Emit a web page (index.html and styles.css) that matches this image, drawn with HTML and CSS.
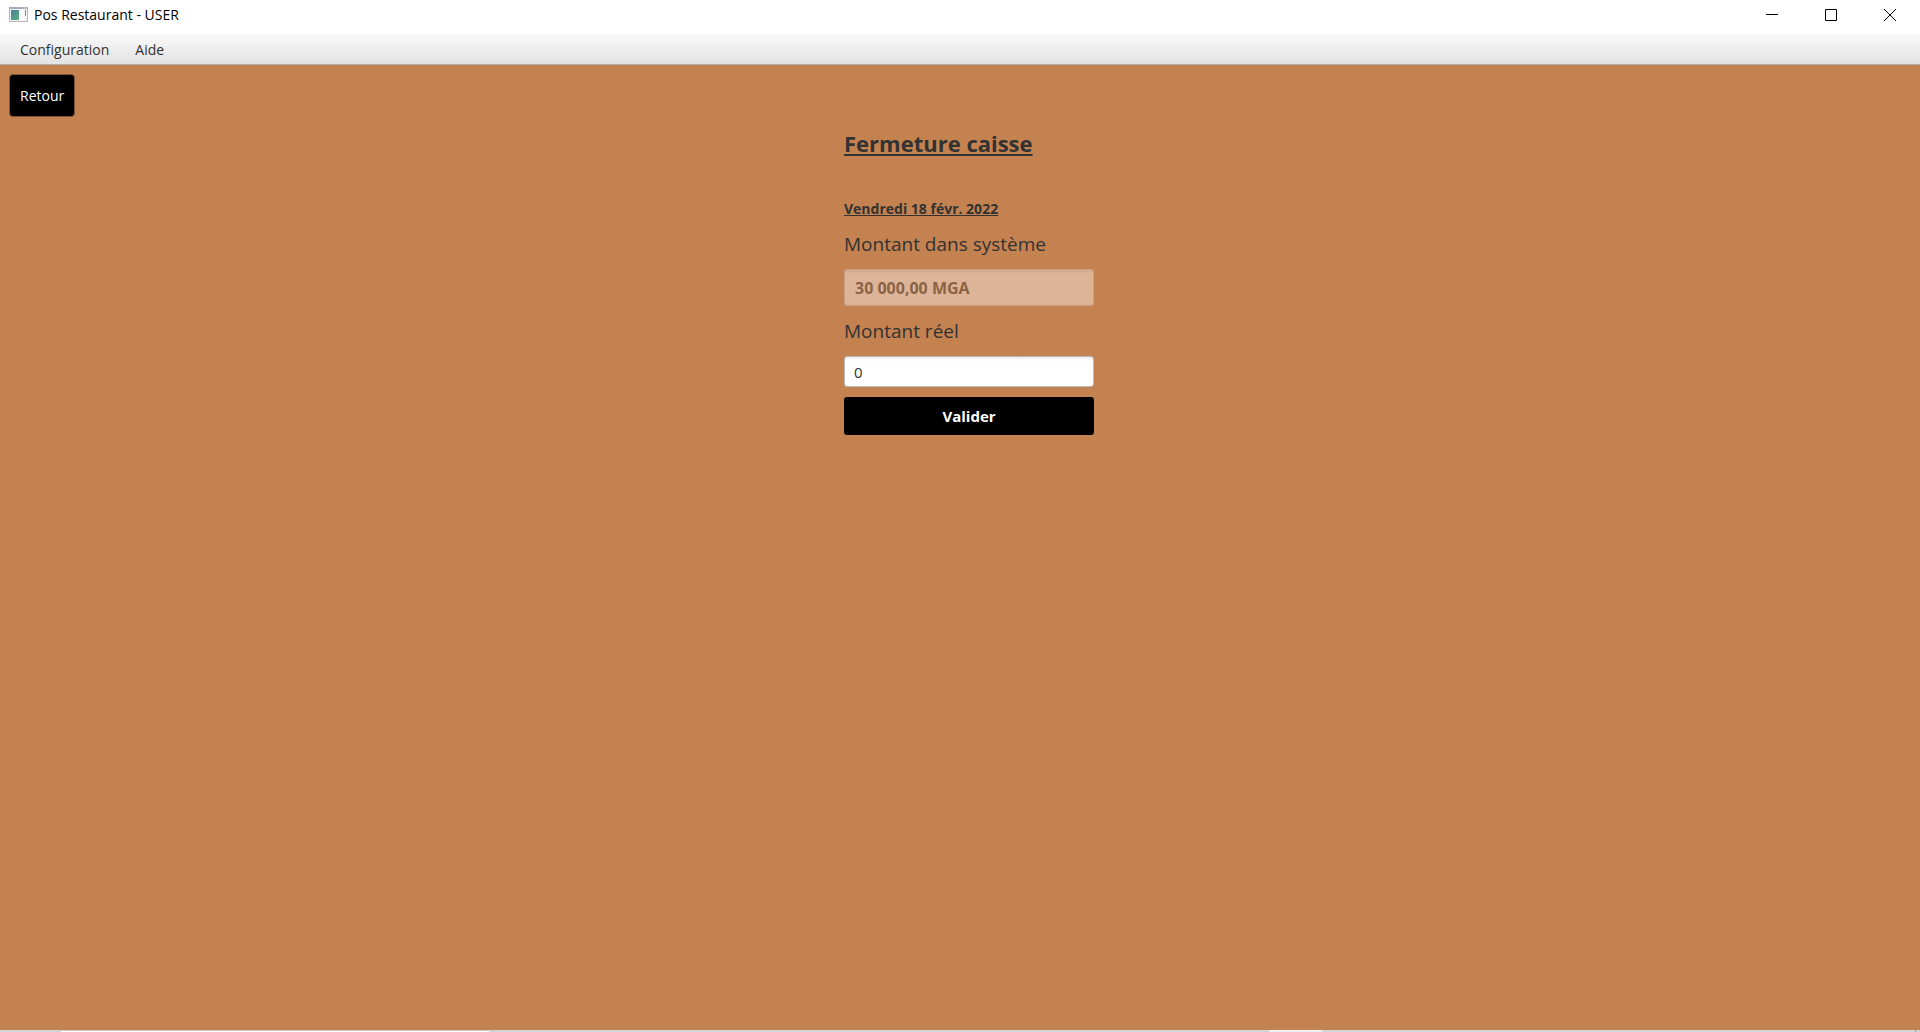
FILE: index.html
```html
<!DOCTYPE html>
<html lang="fr">
<head>
<meta charset="utf-8">
<title>Pos Restaurant - USER</title>
<link rel="stylesheet" href="styles.css">
</head>
<body>
<header class="titlebar">
  <svg class="app-icon" width="19" height="16" viewBox="0 0 19 16" aria-hidden="true">
    <defs><linearGradient id="pane" x1="0" y1="0" x2="1" y2="1"><stop offset="0" stop-color="#4a7fa0"/><stop offset="1" stop-color="#5fae7c"/></linearGradient></defs>
    <rect x=".5" y=".5" width="18" height="14" fill="#f4f5f7" stroke="#b3b7bd"/>
    <path d="M0 1h19" stroke="#a3abb8" stroke-width="2"/>
    <path d="M13 1h1M15 1h1M17 1h1" stroke="#dfe4ec"/>
    <rect x="2" y="3" width="8" height="10" fill="url(#pane)"/>
    <path d="M16.500 3v6" stroke="#5b9b8e"/>
    <path d="M12 3h3v10h-3z" fill="#fff"/>
  </svg>
  <span class="title">Pos Restaurant - USER</span>
  <div class="window-controls">
    <button class="window-button" aria-label="Réduire"><svg width="12" height="12" viewBox="0 0 12 12"><path d="M0 5.500h12"/></svg></button>
    <button class="window-button" aria-label="Agrandir"><svg width="12" height="12" viewBox="0 0 12 12"><path d="M.5.5h11v11H.5z"/></svg></button>
    <button class="window-button" aria-label="Fermer"><svg width="12" height="12" viewBox="0 0 12 12"><path d="M0 0l12 12M12 0L0 12"/></svg></button>
  </div>
</header>
<nav class="menubar">
  <button class="menu">Configuration</button>
  <button class="menu">Aide</button>
</nav>
<main class="content">
  <button class="back">Retour</button>
  <form class="closing">
    <h1 class="heading">Fermeture caisse</h1>
    <p class="date">Vendredi 18 févr. 2022</p>
    <label class="label" for="system">Montant dans système</label>
    <input class="field field-system" id="system" type="text" value="30 000,00 MGA" disabled>
    <label class="label" for="real">Montant réel</label>
    <input class="field" id="real" type="text" value="0">
    <button class="submit" type="button">Valider</button>
  </form>
</main>
<footer class="taskbar">
  <div class="task-search"></div>
  <div class="task-active"></div>
  <div class="task-desktop"></div>
</footer>
</body>
</html>
```
FILE: styles.css
```css
* {
  box-sizing: border-box;
}

body {
  margin: 0;
  min-height: 100vh;
  display: flex;
  flex-direction: column;
  background: #c48251;
  color: #323232;
  font: 15px/20px "Open Sans", "Noto Sans", sans-serif;
}

button,
input {
  font: inherit;
  color: inherit;
  border: 0;
  margin: 0;
}

.titlebar {
  height: 34px;
  display: flex;
  align-items: center;
  padding: 0 1px 4px 9px;
  background: #fff;
  color: #000;
  font-size: 14px;
}

.title {
  margin-left: 6px;
}

.window-controls {
  display: flex;
  margin-left: auto;
}

.window-button {
  width: 59px;
  height: 28px;
  padding: 0;
  display: grid;
  place-items: center;
  background: none;
}

.window-button svg {
  fill: none;
  stroke: #000;
}

.menubar {
  height: 31px;
  display: flex;
  padding: 1px 10px 0;
  gap: 6px;
  background: linear-gradient(#fafafa, #e2e2e2);
  border-bottom: 1px solid #b0b0b0;
}

.menu {
  padding: 0 10px;
  background: none;
  font-size: 14px;
}

.content {
  flex: 1;
  display: flex;
  flex-direction: column;
  align-items: flex-start;
  padding: 9px;
}

.back {
  height: 43px;
  padding: 0 10px;
  background: #000;
  border: 1px solid #7f5434;
  border-radius: 4px;
  color: #fff;
  font-size: 14px;
}

.closing {
  width: 268px;
  align-self: center;
  display: flex;
  flex-direction: column;
  padding: 10px 0 0 18px;
}

.heading {
  margin: 0 0 40px;
  font-size: 22px;
  line-height: 32px;
  white-space: nowrap;
  text-decoration: underline;
}

.date {
  margin: 0 0 11px;
  font-size: 14px;
  font-weight: 700;
  text-decoration: underline;
}

.label {
  margin-bottom: 11px;
  font-size: 19px;
  line-height: 28px;
}

.field {
  width: 100%;
  height: 31px;
  margin-bottom: 10px;
  padding: 0 9px;
  background: linear-gradient(#ececec, #fff 4px);
  border: 1px solid #bababa;
  border-radius: 3px;
}

.field-system {
  height: 37px;
  margin-bottom: 11px;
  padding: 0 10px;
  background: linear-gradient(#d3aa8d, #ddb498 4px);
  border-color: #c9a083;
  color: #8b6344;
  font-size: 16px;
  font-weight: 700;
}

.submit {
  height: 38px;
  background: #000;
  border-radius: 3px;
  color: #fff;
  font-weight: 700;
}

.taskbar {
  height: 2px;
  display: flex;
  padding: 0 4px 0 61px;
  background: #d0d5d8;
}

.task-search {
  width: 428px;
  background: #fff;
  border-top: 1px solid #c8cdd0;
}

.task-active {
  width: 53px;
  margin-left: 780px;
  background: #eef0f1;
}

.task-desktop {
  width: 1px;
  margin-left: auto;
  background: #9da1a4;
}
```
